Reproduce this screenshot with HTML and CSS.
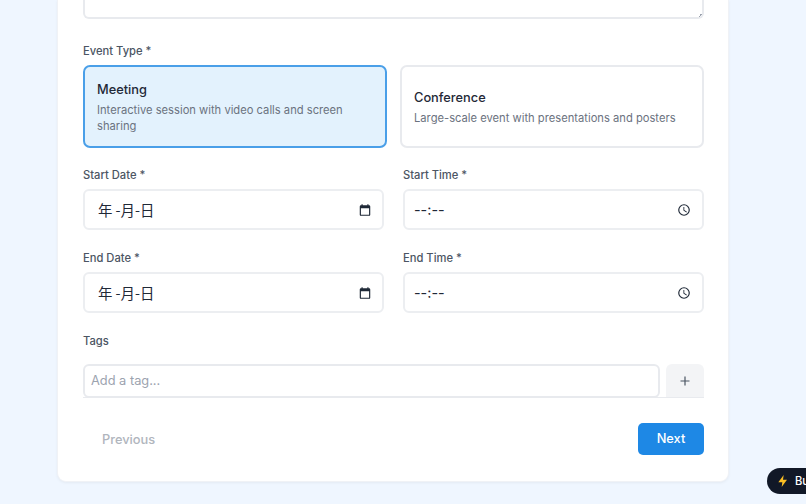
FILE: index.html
```html
<!DOCTYPE html>
<html lang="zh">
<head>
    <meta charset="UTF-8">
    <meta name="viewport" content="width=device-width, initial-scale=1.0">
    <title>Create Event</title>
    <link rel="stylesheet" href="styles.css">
</head>
<body>

<main class="card">
    <div class="textarea-end"></div>

    <div class="label type-label">Event Type *</div>
    <div class="type-row">
        <div class="type-option selected">
            <div class="type-title">Meeting</div>
            <div class="type-desc">Interactive session with video calls and screen sharing</div>
        </div>
        <div class="type-option">
            <div class="type-title">Conference</div>
            <div class="type-desc">Large-scale event with presentations and posters</div>
        </div>
    </div>

    <div class="field-grid">
        <div class="field">
            <div class="label">Start Date *</div>
            <div class="input">
                <span class="date-text">年 -月-日</span>
                <svg class="icon" viewBox="0 0 24 24"><path d="M19 4h-1V2h-2v2H8V2H6v2H5a2 2 0 0 0-2 2v14a2 2 0 0 0 2 2h14a2 2 0 0 0 2-2V6a2 2 0 0 0-2-2zm0 16H5V9h14v11z"/></svg>
            </div>
        </div>
        <div class="field">
            <div class="label">Start Time *</div>
            <div class="input">
                <span class="time-text">--:--</span>
                <svg class="icon clock" viewBox="0 0 24 24"><path d="M12 2a10 10 0 1 0 0 20 10 10 0 0 0 0-20zm0 18a8 8 0 1 1 0-16 8 8 0 0 1 0 16zm.5-13H11v6l5.2 3.1.8-1.2-4.5-2.7V7z"/></svg>
            </div>
        </div>
        <div class="field">
            <div class="label">End Date *</div>
            <div class="input">
                <span class="date-text">年 -月-日</span>
                <svg class="icon" viewBox="0 0 24 24"><path d="M19 4h-1V2h-2v2H8V2H6v2H5a2 2 0 0 0-2 2v14a2 2 0 0 0 2 2h14a2 2 0 0 0 2-2V6a2 2 0 0 0-2-2zm0 16H5V9h14v11z"/></svg>
            </div>
        </div>
        <div class="field">
            <div class="label">End Time *</div>
            <div class="input">
                <span class="time-text">--:--</span>
                <svg class="icon clock" viewBox="0 0 24 24"><path d="M12 2a10 10 0 1 0 0 20 10 10 0 0 0 0-20zm0 18a8 8 0 1 1 0-16 8 8 0 0 1 0 16zm.5-13H11v6l5.2 3.1.8-1.2-4.5-2.7V7z"/></svg>
            </div>
        </div>
    </div>

    <div class="label tags-label">Tags</div>
    <div class="tag-row">
        <div class="tag-input">Add a tag...</div>
        <div class="tag-add">
            <svg viewBox="0 0 12 12"><path d="M6 1.5v9M1.5 6h9"/></svg>
        </div>
    </div>

    <div class="actions">
        <div class="btn-prev">Previous</div>
        <div class="btn-next">Next</div>
    </div>
</main>

<div class="badge">
    <svg viewBox="0 0 24 24"><path d="M13 3 5 14h6l-1 7 8-11h-6z"/></svg>
    <span>Built</span>
</div>

</body>
</html>
```

FILE: styles.css
```css
html, body {
    height: 504px;
    overflow: hidden;
}
body {
    font-family: Inter, "Noto Sans", sans-serif;
    margin: 0;
    padding: 0 77px 0 57px;
    background-color: #eff6ff;
    color: #111827;
}
.card {
    box-sizing: border-box;
    height: 482px;
    padding: 0 24px 0 25px;
    background-color: white;
    border: 1px solid #f0f2f6;
    border-top: 0;
    border-radius: 0 0 9px 9px;
    box-shadow: 0 1px 3px rgba(0, 0, 0, 0.05);
}
.textarea-end {
    position: relative;
    height: 19px;
    box-sizing: border-box;
    border: 2px solid #e8eaee;
    border-top: 0;
    border-radius: 0 0 6px 6px;
}
.textarea-end::after {
    content: "";
    position: absolute;
    right: 0;
    bottom: 0;
    width: 5px;
    height: 5px;
    background: linear-gradient(135deg, transparent 60%, #9ca3af 60%, #9ca3af 75%, transparent 75%);
}
.label {
    font-size: 11.2px;
    font-weight: 500;
    line-height: 16px;
    color: #4b5563;
}
.type-label {
    margin-top: 24px;
}
.type-row {
    display: flex;
    gap: 13px;
    margin-top: 6px;
}
.type-option {
    flex: 1;
    box-sizing: border-box;
    height: 83px;
    padding: 0 12px;
    border: 2px solid #e8eaee;
    border-radius: 7px;
    display: flex;
    flex-direction: column;
    justify-content: center;
}
.type-option.selected {
    background-color: #e3f2fd;
    border-color: #4a9fe8;
}
.type-title {
    font-size: 12.8px;
    font-weight: 500;
    line-height: 21px;
    margin-bottom: 2px;
    color: #1f2937;
}
.type-desc {
    font-size: 11.2px;
    line-height: 16px;
    color: #6b7280;
}
.field-grid {
    display: grid;
    grid-template-columns: 301px 301px;
    column-gap: 19px;
    row-gap: 20px;
    margin-top: 19px;
}
.field .label {
    margin-bottom: 6px;
}
.input {
    box-sizing: border-box;
    height: 41px;
    padding: 0 10px 0 9px;
    border: 2px solid #eceef1;
    border-radius: 6px;
    display: flex;
    align-items: center;
    justify-content: space-between;
}
.date-text {
    margin-left: 4px;
    font-family: "Noto Sans CJK SC", Inter, sans-serif;
    font-size: 14.4px;
    color: #1f2937;
}
.time-text {
    font-size: 14.4px;
    color: #1f2937;
}
.icon {
    width: 14px;
    height: 14px;
    fill: #1f2937;
}
.icon.clock {
    margin-right: 1px;
}
.tags-label {
    margin-top: 20px;
}
.tag-row {
    display: flex;
    justify-content: space-between;
    height: 33px;
    margin-top: 15px;
    border-bottom: 1px solid #e8eaee;
}
.tag-input {
    box-sizing: border-box;
    width: 577px;
    height: 34px;
    padding: 0 6px;
    border: 2px solid #e8eaee;
    border-radius: 6px;
    background-color: white;
    font-size: 12.8px;
    line-height: 30px;
    color: #9ca3af;
}
.tag-add {
    width: 38px;
    height: 33px;
    background-color: #f3f4f6;
    border-radius: 6px 6px 0 0;
    display: flex;
    align-items: center;
    justify-content: center;
}
.tag-add svg {
    width: 12px;
    height: 12px;
    fill: none;
    stroke: #4b5563;
    stroke-width: 1.2;
}
.actions {
    display: flex;
    align-items: center;
    justify-content: space-between;
    margin-top: 25px;
}
.btn-prev {
    padding-left: 19px;
    font-size: 12.8px;
    font-weight: 500;
    color: #b0b5bd;
}
.btn-next {
    box-sizing: border-box;
    width: 66px;
    height: 32px;
    background-color: #1e88e5;
    border-radius: 5px;
    color: white;
    font-size: 12.8px;
    font-weight: 500;
    line-height: 32px;
    text-align: center;
}
.badge {
    position: absolute;
    left: 767px;
    top: 468px;
    width: 60px;
    height: 26px;
    padding-left: 8px;
    box-sizing: border-box;
    background-color: #111827;
    border-radius: 13px;
    display: flex;
    align-items: center;
    gap: 4px;
    color: white;
    font-size: 11.2px;
    font-weight: 500;
}
.badge svg {
    width: 16px;
    height: 16px;
    fill: #fbbf24;
}
```
